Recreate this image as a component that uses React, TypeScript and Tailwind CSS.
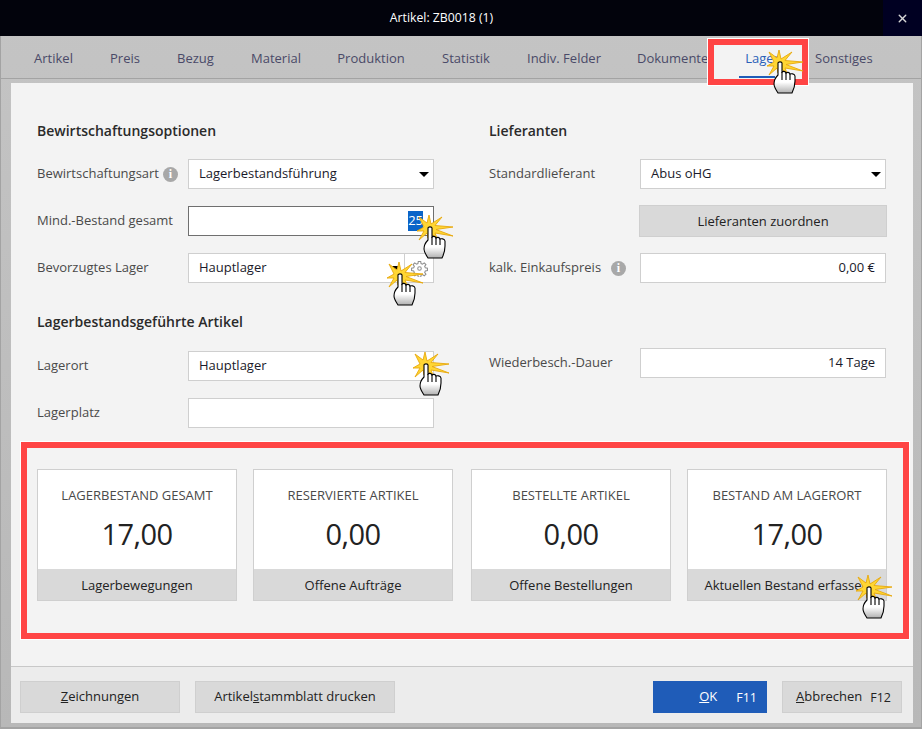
import { X } from "lucide-react"

const font = { fontFamily: '"Open Sans", "Noto Sans", sans-serif' }

function Clicker({ className }: { className: string }) {
  const rays =
    "M-1 -13 L1 -4 L12 -11 L5 -2.5 L23 -1 L6 1.5 L23 8 L5 5 L7 10 L1 6 L-2 10 L-3 5 L-11 12 L-6 3 L-13 3 L-6 -1 L-11 -11 L-3 -5 Z"
  return (
    <svg
      className={`absolute pointer-events-none ${className}`}
      width="50"
      height="56"
      viewBox="-20 -20 50 56"
    >
      <defs>
        <linearGradient id="palm" x1="0" y1="0" x2="0" y2="1">
          <stop offset="0" stopColor="#ffffff" />
          <stop offset="0.65" stopColor="#ffffff" />
          <stop offset="1" stopColor="#b0b0b0" />
        </linearGradient>
      </defs>
      <path d={rays} fill="#ffd633" stroke="#e8a80c" strokeWidth="0.9" />
      <path
        d="M-2 0 C-2 -1.5 2 -1.5 2 0 L2 9 C3 8 5.5 8 6 10 C7 9 9.5 9 10 11 C11 10.5 14.5 10.5 15 13 L15 18 C15 23 13.5 27 12 30 L-2 30 C-4 27 -6 24 -6 21 C-6 17 -4 14 -2 12 Z"
        fill="url(#palm)"
        stroke="#000000"
        strokeWidth="1.1"
      />
      <path d="M2 9 L2 17 M6 10 L6 17 M10 11 L10 17" stroke="#000000" strokeWidth="1.1" fill="none" />
    </svg>
  )
}

function Gear() {
  return (
    <svg width="17" height="17" viewBox="0 0 24 24" fill="none" stroke="#8f8f8f" strokeWidth="1.5">
      <circle cx="12" cy="12" r="2.5" />
      <path d="M10.3 2h3.4l.5 3 2 .9 2.5-1.8 2.4 2.4-1.8 2.5.9 2 3 .5v3.4l-3 .5-.9 2 1.8 2.5-2.4 2.4-2.5-1.8-2 .9-.5 3h-3.4l-.5-3-2-.9-2.5 1.8-2.4-2.4 1.8-2.5-.9-2-3-.5v-3.4l3-.5.9-2-1.8-2.5 2.4-2.4 2.5 1.8 2-.9z" />
    </svg>
  )
}

function Info({ className = "" }: { className?: string }) {
  return (
    <span
      className={`w-[15px] h-[15px] rounded-full bg-[#a8a8a8] text-white text-[12px] font-bold leading-[15px] text-center ${className}`}
      style={{ fontFamily: "Liberation Serif, serif" }}
    >
      i
    </span>
  )
}

function Caret() {
  return <span className="w-0 h-0 border-x-[5px] border-x-transparent border-t-[5px] border-t-black" />
}

function Field({ children, right, dark, select }: { children?: React.ReactNode; right?: boolean; dark?: boolean; select?: boolean }) {
  return (
    <div className={`h-full flex items-center pl-[10px] bg-white border text-[#1a1a2a] ${select ? "pr-[4px]" : "pr-[10px]"} ${dark ? "border-[#6f6f6f]" : "border-[#cfcfcf]"} ${right ? "justify-end" : "justify-between"}`}>
      {children}
    </div>
  )
}

function Row({ label, info, h = "h-[30px]", mt, children }: { label?: string; info?: React.ReactNode; h?: string; mt: string; children: React.ReactNode }) {
  return (
    <div className={`flex items-center ${h} ${mt}`}>
      <div className="w-[151px] flex items-center justify-between pr-[10px] text-[#4a4a4a]">
        <span>{label}</span>
        {info}
      </div>
      <div className="w-[246px] h-full shrink-0">{children}</div>
    </div>
  )
}

function Stat({ title, value, action }: { title: string; value: string; action: string }) {
  return (
    <div className="w-[200px] h-[132px] flex flex-col border border-[#cfcfcf] bg-white">
      <div className="h-[99px] flex flex-col items-center">
        <div className="mt-[16px] text-[13px] font-medium text-[#4a4a4a]">{title}</div>
        <div className="mt-[8px] text-[29px] leading-[40px] tracking-[-0.6px] text-[#222222]">{value}</div>
      </div>
      <div className="flex-1 bg-[#d9d9d9] flex items-center justify-center pt-[2px] text-[#222222] font-medium">{action}</div>
    </div>
  )
}

function FooterButton({ className, children }: { className: string; children: React.ReactNode }) {
  return (
    <button className={`h-[32px] flex items-center pt-[1px] bg-[#d9d9d9] border border-[#cfcfcf] text-[#222222] font-medium ${className}`}>
      {children}
    </button>
  )
}

const tabs = [
  { name: "Artikel", w: "w-[39px] ml-[34px]" },
  { name: "Preis", w: "w-[29px] ml-[37px]" },
  { name: "Bezug", w: "w-[37px] ml-[38px]" },
  { name: "Material", w: "w-[49px] ml-[37px]" },
  { name: "Produktion", w: "w-[68px] ml-[37px]" },
  { name: "Statistik", w: "w-[48px] ml-[37px]" },
  { name: "Indiv. Felder", w: "w-[73px] ml-[37px]" },
  { name: "Dokumente", w: "w-[70px] ml-[37px]" },
]

export default function App() {
  return (
    <div
      className="relative w-[922px] h-[729px] overflow-hidden flex flex-col bg-gradient-to-b from-[#c4c4c4] to-[#b8b8b8] shadow-[inset_1px_0_0_#a3a3a3,inset_-1px_0_0_#a3a3a3,inset_0_-2px_0_#a3a3a3] text-[13px]"
      style={font}
    >
      <div className="h-[36px] shrink-0 bg-[#02030c] relative flex items-center justify-center pr-[39px] text-white text-[12.25px]">
        Artikel: ZB0018 (1)
        <div className="absolute right-0 top-0 w-[39px] h-[36px] bg-[#000022] flex items-center justify-center">
          <X size={13} strokeWidth={2.5} className="text-[#d8d8d8]" />
        </div>
      </div>

      <div className="h-[43px] shrink-0 flex items-center pt-[3px] border-b border-[#a3a3a3] text-[#4a4a68] font-medium whitespace-nowrap">
        {tabs.map((t) => (
          <span key={t.name} className={`${t.w} shrink-0 text-center`}>{t.name}</span>
        ))}
        <span className="ml-[108px] shrink-0">Sonstiges</span>
      </div>

      <div className="flex-1 flex flex-col ml-[11px] mr-[9px] mt-[4px] mb-[7px] bg-[#f3f3f3]">
        <div className="flex-1 flex flex-col px-[10px]">
          <div className="flex gap-[55px] pl-[16px] h-[359px]">
            <div className="w-[397px] shrink-0">
              <h2 className="h-[20px] mt-[38px] text-[14px] font-semibold leading-[20px] text-[#2a2a2a]">Bewirtschaftungsoptionen</h2>
              <Row label="Bewirtschaftungsart" info={<Info />} mt="mt-[18px]">
                <Field select>Lagerbestandsführung <Caret /></Field>
              </Row>
              <Row label="Mind.-Bestand gesamt" mt="mt-[17px]">
                <Field right dark><span className="bg-[#0a64c8] text-white">25</span></Field>
              </Row>
              <Row label="Bevorzugtes Lager" mt="mt-[17px]">
                <div className="h-full flex">
                  <div className="w-[218px]"><Field select>Hauptlager <Caret /></Field></div>
                  <div className="w-[30px] -ml-px flex items-center justify-center bg-white border border-[#cfcfcf]"><Gear /></div>
                </div>
              </Row>
              <h2 className="h-[20px] mt-[29px] text-[14px] font-semibold leading-[20px] text-[#2a2a2a]">Lagerbestandsgeführte Artikel</h2>
              <Row label="Lagerort" mt="mt-[19px]">
                <Field>Hauptlager</Field>
              </Row>
              <Row label="Lagerplatz" mt="mt-[17px]">
                <Field />
              </Row>
            </div>
            <div className="w-[398px] shrink-0">
              <h2 className="h-[20px] mt-[38px] text-[14px] font-semibold leading-[20px] text-[#2a2a2a]">Lieferanten</h2>
              <Row label="Standardlieferant" mt="mt-[18px]">
                <Field select>Abus oHG <Caret /></Field>
              </Row>
              <Row h="h-[32px]" mt="mt-[16px]">
                <div className="h-full -mx-px flex items-center justify-center pt-[2px] bg-[#d9d9d9] border border-[#cfcfcf] font-medium text-[#222222]">Lieferanten zuordnen</div>
              </Row>
              <Row label="kalk. Einkaufspreis" info={<Info className="mr-[4px]" />} mt="mt-[16px]">
                <Field right>0,00 €</Field>
              </Row>
              <Row label="Wiederbesch.-Dauer" mt="mt-[65px]">
                <Field right>14 Tage</Field>
              </Row>
            </div>
          </div>

          <div className="w-[888px] h-[197px] border-[6px] border-[#ff4444] outline outline-1 outline-white flex justify-between pl-[10px] pr-[16px] pt-[21px]">
            <Stat title="LAGERBESTAND GESAMT" value="17,00" action="Lagerbewegungen" />
            <div className="w-[16px]" />
            <Stat title="RESERVIERTE ARTIKEL" value="0,00" action="Offene Aufträge" />
            <div className="w-[18px]" />
            <Stat title="BESTELLTE ARTIKEL" value="0,00" action="Offene Bestellungen" />
            <div className="w-[16px]" />
            <Stat title="BESTAND AM LAGERORT" value="17,00" action="Aktuellen Bestand erfassen" />
          </div>
        </div>

        <div className="h-[57px] shrink-0 mt-[27px] flex items-center pt-[3px] pl-[9px] pr-[11px] bg-[#ececec] border-t border-[#c8c8c8]">
          <FooterButton className="w-[160px] justify-center"><span><u>Z</u>eichnungen</span></FooterButton>
          <FooterButton className="w-[200px] ml-[15px] justify-center"><span>Artikel<u>s</u>tammblatt drucken</span></FooterButton>
          <div className="flex-1" />
          <button className="w-[114px] h-[32px] flex items-center justify-end pt-[1px] pr-[10px] gap-[19px] bg-[#1f5cb8] text-white font-medium">
            <span><u>O</u>K</span><span className="mt-[2px] font-normal text-[12.5px]">F11</span>
          </button>
          <FooterButton className="w-[120px] ml-[15px] justify-end pr-[10px] gap-[8px]"><span><u>A</u>bbrechen</span><span className="mt-[2px] font-normal text-[12.5px]">F12</span></FooterButton>
        </div>
      </div>

      <div className="absolute left-[708px] top-[39px] w-[100px] h-[46px] border-[6px] border-[#ff4444] outline outline-1 outline-white bg-[#f3f3f3] flex flex-col items-center">
        <span className="mt-[4px] ml-[8px] text-[#2b5fb8] font-medium leading-[18px]">Lager</span>
        <span className="mt-auto mb-px w-[36px] h-[2px] bg-[#1f5cb8] -ml-[2px]" />
      </div>

      <Clicker className="left-[760px] top-[43px]" />
      <Clicker className="left-[410px] top-[208px]" />
      <Clicker className="left-[380px] top-[255px]" />
      <Clicker className="left-[406px] top-[345px]" />
      <Clicker className="left-[849px] top-[568px]" />
    </div>
  )
}
